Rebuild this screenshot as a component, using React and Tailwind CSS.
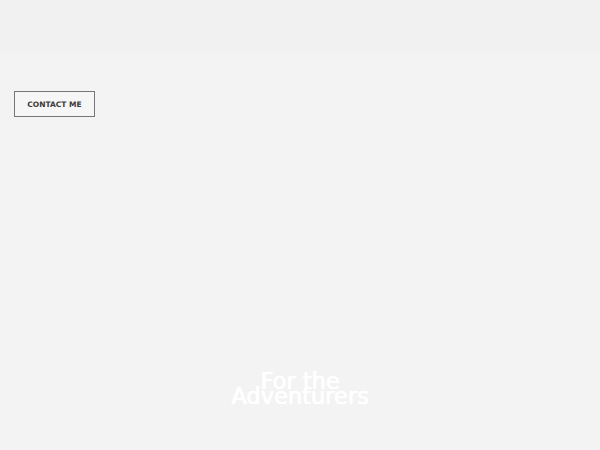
export default function App() {
  return (
    <div className="w-[600px] h-[450px] bg-[#f3f3f3] flex flex-col overflow-hidden" style={{ fontFamily: '"DejaVu Sans", sans-serif' }}>
      <div className="h-[52px] bg-[#f1f1f1] shrink-0" />
      <div className="pt-[39px] pl-[14px]">
        <button className="w-[81px] h-[26px] border border-[#777777] bg-[#f6f6f6] text-[7.5px] leading-none font-bold text-[#3a3a3a] flex items-center justify-center pt-[1px]">
          CONTACT ME
        </button>
      </div>
      <div className="flex-1" />
      <div className="flex justify-center pb-[46px]">
        <h1 className="text-[22.5px] font-normal text-white text-center leading-[15px] [text-shadow:0.5px_0_0_#ffffff,0_0_1px_#ffffff]">
          For the
          <br />
          Adventurers
        </h1>
      </div>
    </div>
  );
}
